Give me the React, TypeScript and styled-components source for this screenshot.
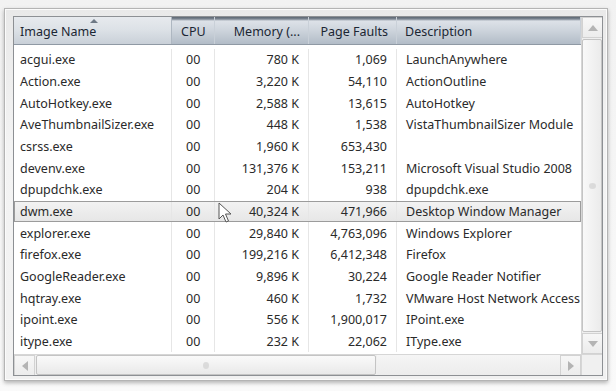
import styled, { createGlobalStyle } from 'styled-components';

const GlobalStyle = createGlobalStyle`
  body {
    margin: 0;
    background: #f7f7f7;
    font-family: "Noto Sans", "Open Sans", sans-serif;
  }
`;

type Proc = {
  name: string;
  cpu: string;
  mem: string;
  faults: string;
  desc: string;
  selected?: boolean;
};

const procs: Proc[] = [
  { name: 'acgui.exe', cpu: '00', mem: '780 K', faults: '1,069', desc: 'LaunchAnywhere' },
  { name: 'Action.exe', cpu: '00', mem: '3,220 K', faults: '54,110', desc: 'ActionOutline' },
  { name: 'AutoHotkey.exe', cpu: '00', mem: '2,588 K', faults: '13,615', desc: 'AutoHotkey' },
  { name: 'AveThumbnailSizer.exe', cpu: '00', mem: '448 K', faults: '1,538', desc: 'VistaThumbnailSizer Module' },
  { name: 'csrss.exe', cpu: '00', mem: '1,960 K', faults: '653,430', desc: '' },
  { name: 'devenv.exe', cpu: '00', mem: '131,376 K', faults: '153,211', desc: 'Microsoft Visual Studio 2008' },
  { name: 'dpupdchk.exe', cpu: '00', mem: '204 K', faults: '938', desc: 'dpupdchk.exe' },
  { name: 'dwm.exe', cpu: '00', mem: '40,324 K', faults: '471,966', desc: 'Desktop Window Manager', selected: true },
  { name: 'explorer.exe', cpu: '00', mem: '29,840 K', faults: '4,763,096', desc: 'Windows Explorer' },
  { name: 'firefox.exe', cpu: '00', mem: '199,216 K', faults: '6,412,348', desc: 'Firefox' },
  { name: 'GoogleReader.exe', cpu: '00', mem: '9,896 K', faults: '30,224', desc: 'Google Reader Notifier' },
  { name: 'hqtray.exe', cpu: '00', mem: '460 K', faults: '1,732', desc: 'VMware Host Network Access' },
  { name: 'ipoint.exe', cpu: '00', mem: '556 K', faults: '1,900,017', desc: 'IPoint.exe' },
  { name: 'itype.exe', cpu: '00', mem: '232 K', faults: '22,062', desc: 'IType.exe' },
];

// column widths inside the list (px)
const COLS = '158px 43px 94px 88px 184px';

export default function App() {
  return (
    <>
      <GlobalStyle />
      <Stage>
        <Frame>
          <ListView>
            <Content>
              <HeaderRow>
                <HeadCell $sorted>
                  <SortArrow />
                  Image Name
                </HeadCell>
                <HeadCell $pad="9px">CPU</HeadCell>
                <HeadCell $right>Memory (...</HeadCell>
                <HeadCell $right>Page Faults</HeadCell>
                <HeadCell $pad="8px">Description</HeadCell>
              </HeaderRow>
              <Body>
                {procs.map((p) => (
                  <Row key={p.name} $selected={p.selected}>
                    <Cell $pad="6px">{p.name}</Cell>
                    <Cell $pad="14px">{p.cpu}</Cell>
                    <Cell $right>{p.mem}</Cell>
                    <Cell $right>{p.faults}</Cell>
                    <Cell $pad="9px" $last>{p.desc}</Cell>
                  </Row>
                ))}
                <Cursor>
                  <svg width="14" height="22" viewBox="0 0 14 22">
                    <path
                      d="M1 1 L1 17 L5 13 L8 20 L10.5 19 L7.5 12 L13 12 Z"
                      fill="#fff"
                      stroke="#555"
                      strokeWidth="1"
                      strokeLinejoin="round"
                    />
                  </svg>
                </Cursor>
              </Body>
            </Content>

            <VScroll>
              <ScrollBtn>
                <Tri dir="up" />
              </ScrollBtn>
              <VThumb>
                <Grip $vertical />
              </VThumb>
              <ScrollBtn>
                <Tri dir="down" />
              </ScrollBtn>
            </VScroll>

            <HScroll>
              <ScrollBtn>
                <Tri dir="left" />
              </ScrollBtn>
              <HThumb>
                <Grip />
              </HThumb>
              <Track />
              <ScrollBtn>
                <Tri dir="right" />
              </ScrollBtn>
            </HScroll>
            <Corner />
          </ListView>
        </Frame>
      </Stage>
    </>
  );
}

const Stage = styled.div`
  width: 616px;
  height: 391px;
  padding: 8px 8px 10px 4px;
  box-sizing: border-box;
  background: linear-gradient(to bottom, #f2f2f2, #fafafa);
`;

const Frame = styled.div`
  height: 100%;
  box-sizing: border-box;
  padding: 7px 4px 4px 8px;
  border: 1px solid #b4b4b4;
  background: linear-gradient(to bottom, #e9e9e9, #f4f4f4 40%, #f1f1f1);
  box-shadow: 0 2px 4px rgba(0, 0, 0, 0.28), inset 0 0 0 1px #fbfbfb;
`;

const ListView = styled.div`
  height: 100%;
  box-sizing: border-box;
  border: 1px solid #8d9094;
  background: #fff;
  display: grid;
  grid-template-columns: 1fr 21px;
  grid-template-rows: 1fr 21px;
  overflow: hidden;
`;

const Content = styled.div`
  overflow: hidden;
  min-width: 0;
`;

const HeaderRow = styled.div`
  display: grid;
  grid-template-columns: ${COLS};
  height: 28px;
  border-bottom: 1px solid #8f99a4;
  box-sizing: border-box;
`;

const HeadCell = styled.div<{ $sorted?: boolean; $right?: boolean; $pad?: string }>`
  position: relative;
  display: flex;
  align-items: center;
  justify-content: ${(p) => (p.$right ? 'flex-end' : 'flex-start')};
  padding: 2px ${(p) => (p.$right ? '8px' : '0')} 0 ${(p) => p.$pad || '6px'};
  font-size: 12.5px;
  color: #1b2633;
  white-space: nowrap;
  overflow: hidden;
  border-right: 1px solid ${(p) => (p.$sorted ? '#aeb7c1' : '#c9d0d8')};
  background: ${(p) =>
    p.$sorted
      ? 'linear-gradient(to bottom, #e7eaee 0%, #dde2e7 45%, #c9d0d8 100%)'
      : 'linear-gradient(to bottom, #5d6773 0, #7b8591 2px, #dde2e8 4px, #cdd4dc 50%, #b2bcc7 100%)'};
`;

const SortArrow = styled.span`
  position: absolute;
  top: 2px;
  left: 76px;
  width: 0;
  height: 0;
  border-left: 4px solid transparent;
  border-right: 4px solid transparent;
  border-bottom: 4px solid #6f7985;
`;

const Body = styled.div`
  position: relative;
  padding-top: 4px;
`;

const Row = styled.div<{ $selected?: boolean }>`
  display: grid;
  grid-template-columns: ${COLS};
  height: 21.67px;
  box-sizing: border-box;
  align-items: center;
  font-size: 12.5px;
  color: #2a2a2a;
  ${(p) =>
    p.$selected &&
    `
    background: linear-gradient(to bottom, #f3f3f3, #e6e6e6);
    outline: 1px solid #9c9c9c;
    outline-offset: -1px;
  `}
`;

const Cell = styled.div<{ $right?: boolean; $pad?: string; $last?: boolean }>`
  height: 100%;
  display: flex;
  align-items: center;
  justify-content: ${(p) => (p.$right ? 'flex-end' : 'flex-start')};
  padding: 0 ${(p) => (p.$right ? '9px' : '0')} 0 ${(p) => p.$pad || '0'};
  white-space: nowrap;
  overflow: hidden;
  border-right: ${(p) => (p.$last ? 'none' : '1px solid #e6e6e6')};
  box-sizing: border-box;
`;

const Cursor = styled.div`
  position: absolute;
  left: 204px;
  top: 157px;
  line-height: 0;
`;

const VScroll = styled.div`
  display: flex;
  flex-direction: column;
  border-left: 1px solid #d6d6d6;
  background: #efefef;
`;

const HScroll = styled.div`
  display: flex;
  border-top: 1px solid #d6d6d6;
  background: #efefef;
`;

const Corner = styled.div`
  background: #f0f0f0;
  border-top: 1px solid #d6d6d6;
  border-left: 1px solid #d6d6d6;
`;

const ScrollBtn = styled.div`
  width: 21px;
  height: 21px;
  flex: none;
  box-sizing: border-box;
  display: flex;
  align-items: center;
  justify-content: center;
  border: 1px solid #d2d2d2;
  background: linear-gradient(to bottom, #f7f7f7, #ececec);
`;

const Tri = styled.span<{ dir: 'up' | 'down' | 'left' | 'right' }>`
  width: 0;
  height: 0;
  ${(p) =>
    p.dir === 'up'
      ? 'border-left: 5px solid transparent; border-right: 5px solid transparent; border-bottom: 6px solid #b4b4b4;'
      : p.dir === 'down'
      ? 'border-left: 5px solid transparent; border-right: 5px solid transparent; border-top: 6px solid #b4b4b4;'
      : p.dir === 'left'
      ? 'border-top: 5px solid transparent; border-bottom: 5px solid transparent; border-right: 6px solid #b4b4b4;'
      : 'border-top: 5px solid transparent; border-bottom: 5px solid transparent; border-left: 6px solid #b4b4b4;'}
`;

const VThumb = styled.div`
  flex: 1;
  margin: 1px 0;
  border: 1px solid #c4c4c4;
  border-radius: 2px;
  background: linear-gradient(to right, #f9f9f9, #ebebeb);
  display: flex;
  align-items: center;
  justify-content: center;
`;

const HThumb = styled.div`
  width: 338px;
  flex: none;
  margin: 0 1px;
  border: 1px solid #c4c4c4;
  border-radius: 2px;
  background: linear-gradient(to bottom, #fafafa, #e9e9e9);
  display: flex;
  align-items: center;
  justify-content: center;
`;

const Track = styled.div`
  flex: 1;
  background: linear-gradient(to bottom, #f5f5f5, #ececec);
`;

const Grip = styled.span<{ $vertical?: boolean }>`
  width: ${(p) => (p.$vertical ? '7px' : '6px')};
  height: ${(p) => (p.$vertical ? '6px' : '7px')};
  border-radius: 50%;
  background: #d4d4d4;
  opacity: 0.8;
`;
